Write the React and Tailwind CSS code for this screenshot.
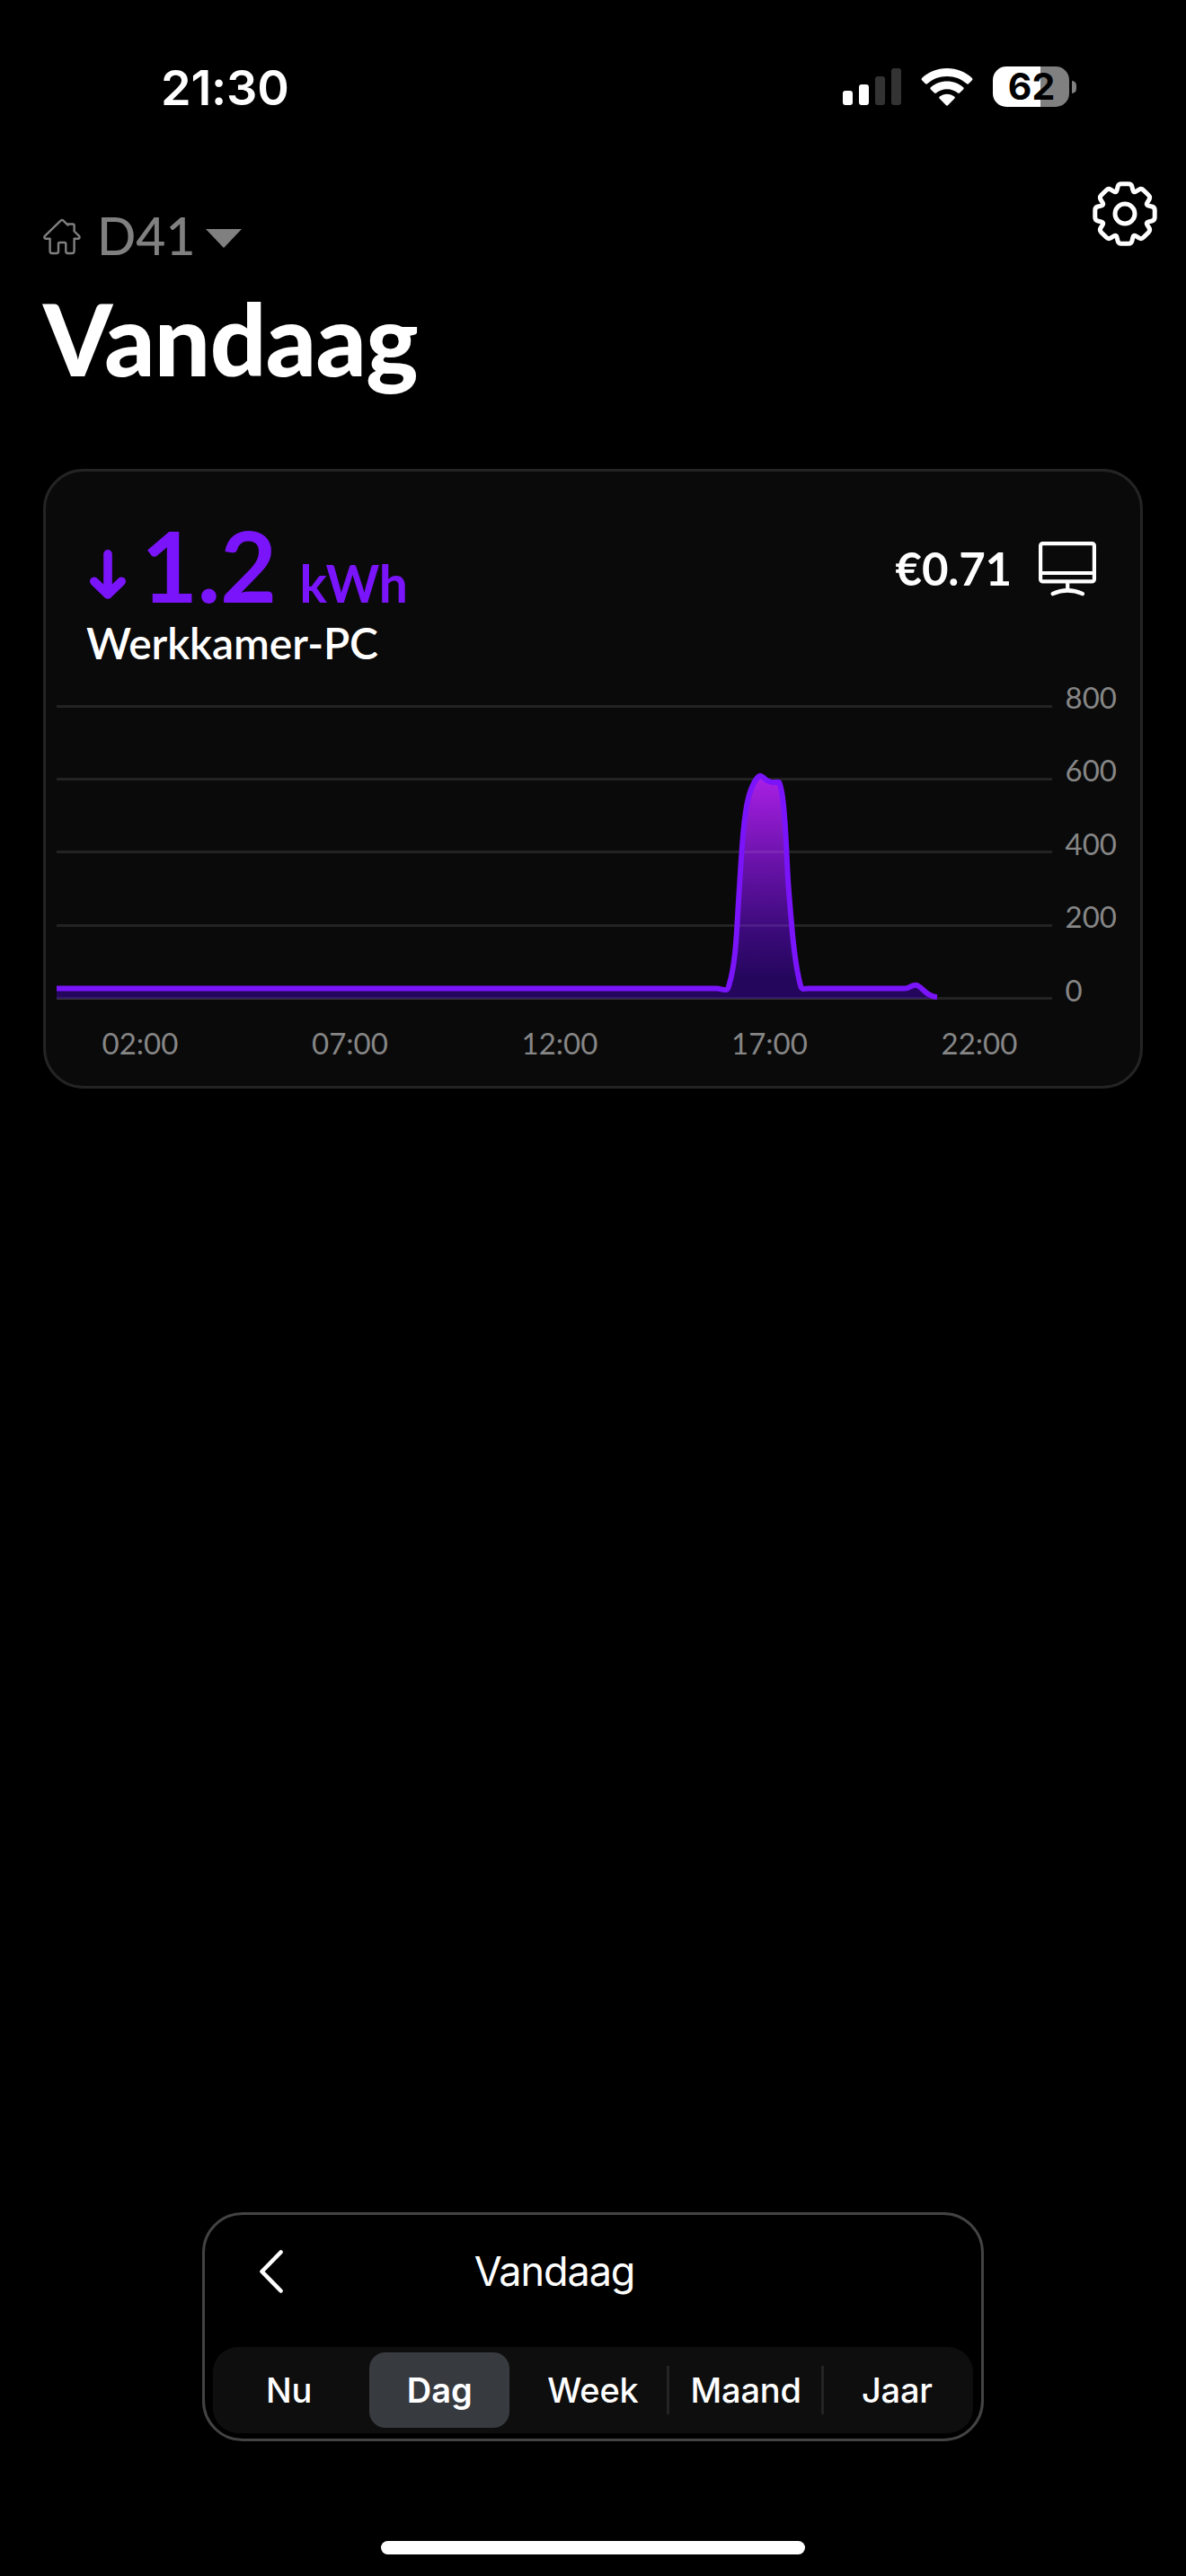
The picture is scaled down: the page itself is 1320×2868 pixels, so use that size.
import React, { useState } from 'react';

const GRID_LINES = [
  { label: '800', y: 41.5, baseline: 43.5 },
  { label: '600', y: 122.5, baseline: 125 },
  { label: '400', y: 203.5, baseline: 206.5 },
  { label: '200', y: 285.5, baseline: 288 },
  { label: '0', y: 366.5, baseline: 369.5 },
];

const HOURS = [
  { label: '02:00', x: 105 },
  { label: '07:00', x: 338.5 },
  { label: '12:00', x: 572 },
  { label: '17:00', x: 805.5 },
  { label: '22:00', x: 1039 },
];

const TABS = ['Nu', 'Dag', 'Week', 'Maand', 'Jaar'];

const USAGE_LINE =
  'M12 355.6 H746 C751 355.6 753 357.4 757 357 C759.5 356.8 759.5 355 760.5 351.5 C768 327 769 290 771 258 C774 212 776 166 782 143 C786 128 792 118.7 795 118.7 C799 118.7 801 126 809 126 C818 126 815.5 123 818.3 133 C822 148 823.5 180 825 215 C826.5 250 829 270 831 295 C834 325 837 342 840.5 354 C841.5 357 844 355.6 850 355.6 H956 C961 355.6 963 351.8 968 351.8 C975 351.8 978 364 992 365.3';

// 8 teeth around the centre
const gearPath = () => {
  const tooth = [
    [-9.6, -23.2],
    [-7.2, -33.2],
    [7.2, -33.2],
  ];
  const points = [];
  for (let i = 0; i < 8; i++) {
    const a = (i * Math.PI) / 4;
    tooth.forEach(([x, y]) => {
      points.push([36 + x * Math.cos(a) - y * Math.sin(a), 36 + x * Math.sin(a) + y * Math.cos(a)]);
    });
  }
  const towards = (p, q, d) => {
    const len = Math.hypot(q[0] - p[0], q[1] - p[1]);
    return [p[0] + ((q[0] - p[0]) * d) / len, p[1] + ((q[1] - p[1]) * d) / len];
  };
  const n = points.length;
  return (
    points
      .map((p, i) => {
        const from = towards(p, points[(i + n - 1) % n], 3.2);
        const to = towards(p, points[(i + 1) % n], 3.2);
        return `${i ? 'L' : 'M'}${from.join(' ')} Q${p.join(' ')} ${to.join(' ')}`;
      })
      .join(' ') + ' Z'
  );
};

const SignalIcon = () => (
  <svg width="65" height="41" viewBox="0 0 65 41">
    <rect x="0" y="25" width="11" height="16" rx="3" fill="#fff" />
    <rect x="18" y="18" width="11" height="23" rx="3" fill="#fff" />
    <rect x="36" y="9" width="11" height="32" rx="3" fill="#333" />
    <rect x="54" y="0" width="11" height="41" rx="3" fill="#333" />
  </svg>
);

const WifiIcon = () => (
  <svg width="58" height="42" viewBox="0 0 58 42" fill="#fff">
    <path d="M29 0 C40 0 50 4.3 57 11 Q58 12.2 57 13.3 L53 17.3 Q52 18.2 51 17.3 C45 11.9 37.4 9 29 9 S13 11.9 7 17.3 Q6 18.2 5 17.3 L1 13.3 Q0 12.2 1 11 C8 4.3 18 0 29 0 Z" />
    <path d="M29 14.5 C36 14.5 42.4 17 47.2 21.3 Q48.3 22.4 47.2 23.5 L43 27.6 Q42 28.5 41 27.6 C37.8 24.8 33.6 23.2 29 23.2 S20.2 24.8 17 27.6 Q16 28.5 15 27.6 L10.8 23.5 Q9.7 22.4 10.8 21.3 C15.6 17 22 14.5 29 14.5 Z" />
    <path d="M29 28.7 C32.2 28.7 35 29.8 37.2 31.6 Q38.4 32.7 37.3 33.8 L30.2 41.1 Q29 42.2 27.8 41.1 L20.7 33.8 Q19.6 32.7 20.8 31.6 C23 29.8 25.8 28.7 29 28.7 Z" />
  </svg>
);

const Battery = () => (
  <div className="flex items-center gap-[3px]">
    <div className="flex h-[45px] w-[85px] items-center justify-center rounded-[15px] bg-[linear-gradient(90deg,#fff_53px,#808080_53px)]">
      <span className="pl-px font-[Inter,sans-serif] text-[41px] leading-[45px] font-bold text-black">62</span>
    </div>
    <div className="h-[14px] w-[5px] rounded-r-full bg-[#808080]" />
  </div>
);

const StatusBar = () => (
  <div className="flex h-[145px] items-start justify-between pt-[57px] pr-[122px] pl-[179px]">
    <span className="font-[Inter,sans-serif] text-[54px] leading-[81px] font-semibold tracking-[-0.2px]">21:30</span>
    <div className="flex h-[79px] items-center">
      <SignalIcon />
      <div className="px-[22px]">
        <WifiIcon />
      </div>
      <Battery />
    </div>
  </div>
);

const HomeIcon = () => (
  <svg width="42" height="42" viewBox="0 0 42 42" fill="none" stroke="#808080" strokeWidth="2.4" strokeLinejoin="round" className="mt-0.5">
    <path d="M19.6 3.6 Q21 2.4 22.4 3.6 L27.6 8.6 V7.5 H33 Q34.6 7.5 34.6 9 V15.5 L40.2 20.8 Q41.2 23.7 39 23.7 H34.6 V37.5 Q34.6 40 32 40 H27.5 Q25.3 40 25.3 37.8 V29.5 Q25.3 28 23.8 28 H18.5 Q17 28 17 29.5 V37.8 Q17 40 14.8 40 H10 Q7.6 40 7.6 37.5 V23.7 H3 Q.6 23.7 1.8 20.8 Z" />
  </svg>
);

const GearIcon = () => (
  <svg width="72" height="72" viewBox="0 0 72 72" fill="none" stroke="#fff" strokeWidth="5" strokeLinejoin="round">
    <path d={gearPath()} />
    <circle cx="36" cy="36" r="11" />
  </svg>
);

const MonitorIcon = () => (
  <svg width="64" height="62" viewBox="0 0 64 62" fill="none" stroke="#fff" strokeWidth="4.2">
    <rect x="2.1" y="2.1" width="59.8" height="42.3" rx="2.5" />
    <path d="M2 35H62 M32.2 44V54" />
    <path d="M15.8 58 Q32 50.8 48.8 58" strokeLinecap="round" strokeWidth="4.6" />
  </svg>
);

const ArrowDown = () => (
  <svg width="40" height="55" viewBox="0 0 40 55" fill="none" stroke="#7a14fa" strokeWidth="9.6" strokeLinecap="round" strokeLinejoin="round">
    <path d="M20 4.8 V49 M4.8 35.2 L20 50 L35.2 35.2" />
  </svg>
);

const UsageChart = () => (
  <svg width="1218" height="464" viewBox="0 0 1218 464" className="block">
    <defs>
      <linearGradient id="usage" gradientUnits="userSpaceOnUse" x1="0" y1="118" x2="0" y2="366">
        <stop offset="0" stopColor="#aa20e6" />
        <stop offset="0.4" stopColor="#6812a8" />
        <stop offset="0.7" stopColor="#3b0a7a" />
        <stop offset="0.92" stopColor="#24065c" />
        <stop offset="1" stopColor="#24065c" />
      </linearGradient>
    </defs>
    {GRID_LINES.map(({ label, y }) => (
      <path key={label} d={`M12 ${y} H1120`} stroke="#232323" strokeWidth="3" />
    ))}
    <path d={`${USAGE_LINE} L992 367 H12 Z`} fill="url(#usage)" />
    {/* grid stays faintly visible through the area */}
    <path d="M775 203.5 H825 M769 285.5 H831 M12 366.5 H990" stroke="#fff" strokeOpacity="0.08" strokeWidth="3" />
    <path d={USAGE_LINE} fill="none" stroke="#7a14fa" strokeWidth="6" strokeLinejoin="round" />
    <g className="font-[Lato,sans-serif] text-[33px]" fill="#868686">
      {GRID_LINES.map(({ label, baseline }) => (
        <text key={label} x="1134.5" y={baseline}>{label}</text>
      ))}
      {HOURS.map(({ label, x }) => (
        <text key={label} x={x} y="428.5" textAnchor="middle">{label}</text>
      ))}
    </g>
  </svg>
);

const UsageCard = () => (
  <section className="mx-12 h-[690px] rounded-[45px] border-[3px] border-[#242424] bg-[#0a0a0a]">
    <div className="flex h-[220px] items-start justify-between pt-[49px] pr-[49px] pl-[45px]">
      <div>
        <div className="flex h-[112px] text-[#7a14fa]">
          <div className="pt-[38px] pl-1">
            <ArrowDown />
          </div>
          <div className="flex items-baseline pl-[17px]">
            <span className="text-[109px] leading-[110px] font-bold tracking-[-0.6px]">1.2</span>
            <span className="pl-[26px] text-[57px] leading-none font-bold tracking-[-0.2px]">kWh</span>
          </div>
        </div>
        <h2 className="text-[48px] leading-[60px] font-semibold tracking-[-0.1px]">Werkkamer-PC</h2>
      </div>
      <div className="flex items-start gap-[30px] pt-[29px]">
        <span className="text-[51px] leading-[60px] font-bold tracking-[-0.2px]">€0.71</span>
        <MonitorIcon />
      </div>
    </div>
    <UsageChart />
  </section>
);

const PeriodPicker = () => {
  const [active, setActive] = useState('Dag');

  return (
    <div className="mx-auto h-[255px] w-[870px] rounded-[45px] border-[3px] border-[#434343] px-[9px] font-[Inter,sans-serif]">
      <div className="flex h-[147px] items-start pt-[39px] pl-[52px]">
        <button type="button" className="w-[26px]">
          <svg width="26" height="48" viewBox="0 0 26 48" fill="none" stroke="#fff" strokeWidth="4.6" strokeLinecap="round" strokeLinejoin="round">
            <path d="M23.5 2.5 L2.5 24 L23.5 45.5" />
          </svg>
        </button>
        <span className="w-[604px] pt-px text-center text-[45px] leading-[46px] tracking-[-1.1px]">Vandaag</span>
      </div>
      <div className="grid h-24 grid-cols-5 items-center rounded-[28px] bg-[#0e0e0e]">
        {TABS.map((tab) => (
          <div
            key={tab}
            className={`flex h-[54px] items-center justify-center ${tab === 'Maand' ? '-mx-[3px] border-x-[3px] border-[#242426] pl-0.5' : ''}`}
          >
            <button
              type="button"
              onClick={() => setActive(tab)}
              className={
                active === tab
                  ? 'mr-[3px] h-[84px] w-[156px] shrink-0 rounded-[18px] bg-[#373a3f] text-[38px] font-semibold'
                  : 'text-[38px] font-medium tracking-[-0.2px]'
              }
            >
              {tab}
            </button>
          </div>
        ))}
      </div>
    </div>
  );
};

const App = () => {
  return (
    <div className="flex h-[2868px] w-[1320px] flex-col bg-black font-[Lato,sans-serif] text-white">
      <StatusBar />
      <header className="flex h-[377px] items-start justify-between pt-[57px] pr-8 pl-12">
        <div>
          <div className="flex items-center pt-[26px]">
            <HomeIcon />
            <span className="pr-[12px] pl-[18px] text-[57px] leading-[68px] font-medium text-[#808080]">D41</span>
            <svg width="40" height="21" viewBox="0 0 40 21" className="mt-[7px]">
              <path d="M0 0H40L20 21Z" fill="#808080" />
            </svg>
          </div>
          <h1 className="pt-3.5 text-[110px] leading-[132px] font-black tracking-[-0.6px]">Vandaag</h1>
        </div>
        <button type="button">
          <GearIcon />
        </button>
      </header>
      <UsageCard />
      <div className="flex-1" />
      <PeriodPicker />
      <div className="mx-auto mt-[111px] mb-6 h-[15px] w-[472px] shrink-0 rounded-full bg-white" />
    </div>
  );
};

export default App;
